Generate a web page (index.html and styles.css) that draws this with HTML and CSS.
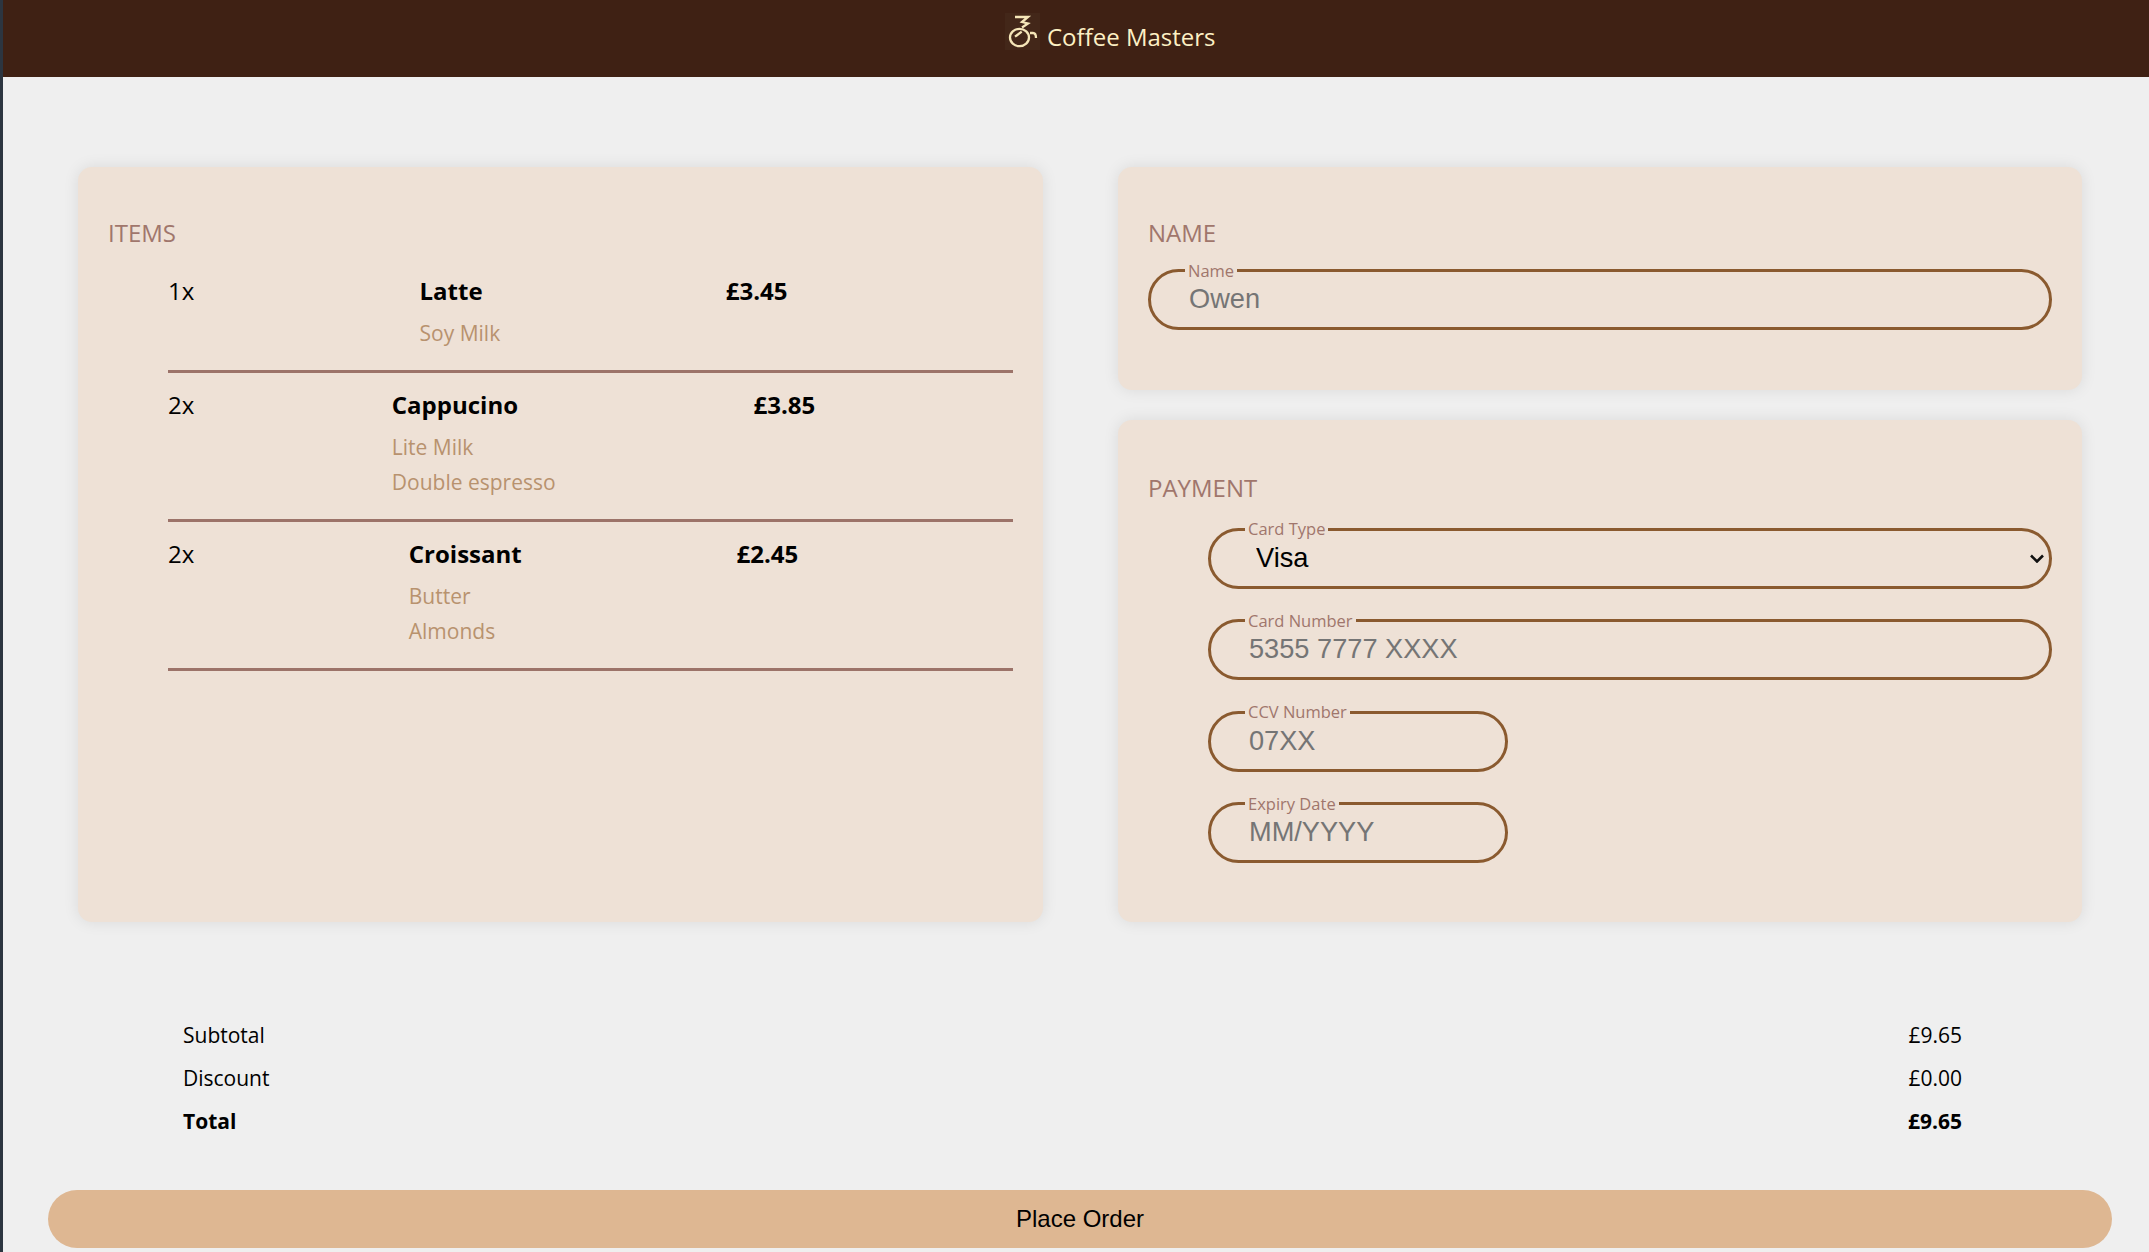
FILE: index.html
```html
<!DOCTYPE html>
<html lang="en">
<head>
    <meta charset="UTF-8">
    <meta name="viewport" content="width=device-width, initial-scale=1.0">
    <title>Coffee Masters</title>
    <link rel="stylesheet" href="styles.css">
</head>
<body>
    <header class="topbar">
        <svg class="logo" width="35" height="37" viewBox="0 0 35 37" fill="none" stroke="#f5e6b8" stroke-width="2.3">
            <path d="M10 4h13l-6 5 6 1.5-6 4"/>
            <ellipse cx="14.5" cy="24.5" rx="9.5" ry="8.7"/>
            <path d="M25 20h3q3 0 3 5"/>
            <path d="M16.7 18.7l-6.7 5"/>
        </svg>
        <span class="brand">Coffee Masters</span>
    </header>
    <main class="page">
        <div class="columns">
            <section class="card items-card">
                <h2 class="card-title">ITEMS</h2>
                <ul class="items">
                    <li class="item">
                        <span class="qty">1x</span>
                        <div class="item-main">
                            <div>
                                <div class="item-name">Latte</div>
                                <div class="extra">Soy Milk</div>
                            </div>
                            <div class="item-price">£3.45</div>
                        </div>
                    </li>
                    <li class="item">
                        <span class="qty">2x</span>
                        <div class="item-main">
                            <div>
                                <div class="item-name">Cappucino</div>
                                <div class="extra">Lite Milk</div>
                                <div class="extra">Double espresso</div>
                            </div>
                            <div class="item-price">£3.85</div>
                        </div>
                    </li>
                    <li class="item">
                        <span class="qty">2x</span>
                        <div class="item-main">
                            <div>
                                <div class="item-name">Croissant</div>
                                <div class="extra">Butter</div>
                                <div class="extra">Almonds</div>
                            </div>
                            <div class="item-price">£2.45</div>
                        </div>
                    </li>
                </ul>
            </section>
            <div class="side">
                <section class="card name-card">
                    <h2 class="card-title">NAME</h2>
                    <fieldset class="field">
                        <legend>Name</legend>
                        <input type="text" placeholder="Owen">
                    </fieldset>
                </section>
                <section class="card payment-card">
                    <h2 class="card-title">PAYMENT</h2>
                    <div class="pay-fields">
                        <fieldset class="field select-field">
                            <legend>Card Type</legend>
                            <select>
                                <option>Visa</option>
                            </select>
                            <svg class="chevron" width="14" height="9" viewBox="0 0 14 9" fill="none" stroke="#111" stroke-width="2.6">
                                <path d="M1 1.5l6 6 6-6"/>
                            </svg>
                        </fieldset>
                        <fieldset class="field">
                            <legend>Card Number</legend>
                            <input type="text" placeholder="5355 7777 XXXX">
                        </fieldset>
                        <fieldset class="field short">
                            <legend>CCV Number</legend>
                            <input type="text" placeholder="07XX">
                        </fieldset>
                        <fieldset class="field short">
                            <legend>Expiry Date</legend>
                            <input type="text" placeholder="MM/YYYY">
                        </fieldset>
                    </div>
                </section>
            </div>
        </div>
        <div class="totals">
            <div class="total-row"><span>Subtotal</span><span>£9.65</span></div>
            <div class="total-row"><span>Discount</span><span>£0.00</span></div>
            <div class="total-row grand"><span>Total</span><span>£9.65</span></div>
        </div>
        <button class="place-order">Place Order</button>
    </main>
</body>
</html>
```

FILE: styles.css
```css
* {
    box-sizing: border-box;
}
html, body {
    height: 100%;
}
body {
    margin: 0;
    background: #efefef;
    border-left: 3px solid #2c3540;
    font-family: "Open Sans", sans-serif;
    color: #000;
    overflow: hidden;
}
.topbar {
    height: 77px;
    background: #3f2114;
    display: flex;
    align-items: center;
    padding-left: 1002px;
    gap: 7px;
}
.logo {
    background: #432719;
    margin-top: -14px;
}
.brand {
    color: #fdf0c4;
    font-size: 24px;
    margin-top: -4px;
}
.page {
    padding: 90px 0 0 45px;
    width: 2109px;
}
.columns {
    display: flex;
    gap: 75px;
    padding-left: 30px;
    padding-right: 30px;
}
.card {
    background: #eee1d6;
    border-radius: 14px;
    box-shadow: 0 0 16px rgba(0, 0, 0, 0.09);
    padding: 51px 30px 0;
}
.items-card {
    width: 965px;
    height: 755px;
}
.side {
    width: 964px;
    display: flex;
    flex-direction: column;
    gap: 30px;
}
.name-card {
    height: 223px;
}
.payment-card {
    height: 502px;
    padding-top: 53px;
}
.card-title {
    margin: 0;
    font-size: 24px;
    font-weight: 400;
    line-height: 30px;
    color: #a0766c;
}
.items {
    list-style: none;
    margin: 11px 0 0;
    padding: 0 0 0 60px;
}
.item {
    display: flex;
    border-bottom: 3px solid #9c7369;
    padding-top: 15px;
    padding-bottom: 19px;
}
.qty {
    font-size: 24px;
    line-height: 33px;
    width: 26px;
}
.item-main {
    flex: 1;
    display: flex;
    justify-content: space-evenly;
}
.item-name, .item-price {
    font-size: 24px;
    line-height: 33px;
    font-weight: 700;
}
.item-name {
    margin-bottom: 9px;
}
.extra {
    font-size: 21px;
    line-height: 35px;
    color: #b8926e;
}
.field {
    margin: 0;
    padding: 0 4px 0 38px;
    height: 67.5px;
    border: 3px solid #8a5a2f;
    border-radius: 31px;
    min-width: 0;
}
.field legend {
    font-size: 16.5px;
    line-height: 16px;
    padding: 0 3px;
    color: #a0766c;
    margin-left: -4px;
}
.field input, .field select {
    width: 100%;
    border: 0;
    background: transparent;
    font-family: "Liberation Sans", Arial, sans-serif;
    font-size: 27.2px;
    padding: 0;
    outline: 0;
    height: 41px;
}
.field select {
    appearance: none;
    color: #000;
    padding-left: 7px;
}
.select-field {
    position: relative;
}
.chevron {
    position: absolute;
    right: 5px;
    top: 17px;
}
.name-card .field {
    margin-top: 14.5px;
}
.pay-fields {
    margin-left: 60px;
    display: flex;
    flex-direction: column;
    gap: 24px;
    margin-top: 18px;
}
.short {
    width: 300px;
}
.totals {
    margin-top: 92px;
    padding: 0 150px 0 135px;
}
.total-row {
    display: flex;
    justify-content: space-between;
    font-size: 21px;
    line-height: 43px;
}
.grand {
    font-weight: 700;
}
.place-order {
    display: block;
    width: 100%;
    margin-top: 47px;
    height: 58px;
    border: 0;
    border-radius: 29px;
    background: #deb792;
    font-family: "Liberation Sans", Arial, sans-serif;
    font-size: 24px;
    color: #000;
}
```
